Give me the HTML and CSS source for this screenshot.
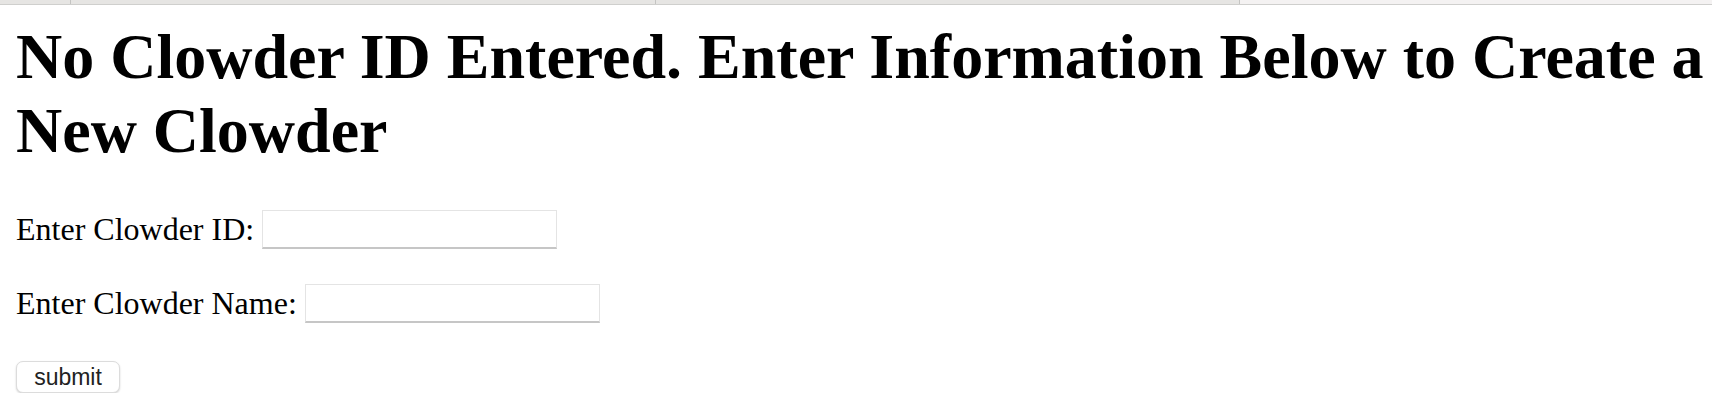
FILE: index.html
```html
<!DOCTYPE html>
<html>
<head>
<meta charset="utf-8">
<link rel="stylesheet" href="styles.css">
</head>
<body>
<div class="tabs">
  <div class="tab tab-a"></div>
  <div class="tab tab-b"></div>
  <div class="tab tab-c"></div>
  <div class="tab tab-active"></div>
</div>
<main class="page">
  <h1 class="title">No Clowder ID Entered. Enter Information Below to Create a New Clowder</h1>
  <form class="form">
    <div class="row">
      <label class="label" for="cid">Enter Clowder ID:</label>
      <input class="field" id="cid" type="text">
    </div>
    <div class="row">
      <label class="label" for="cname">Enter Clowder Name:</label>
      <input class="field" id="cname" type="text">
    </div>
    <button class="submit" type="button">submit</button>
  </form>
</main>
</body>
</html>
```
FILE: styles.css
```css
html, body {
  margin: 0;
  padding: 0;
  background: #ffffff;
}
body {
  font-family: "Liberation Serif", "Times New Roman", serif;
  color: #000;
}
.tabs {
  display: flex;
  height: 4px;
  border-bottom: 1px solid #cfcfcd;
  background: #e6e5e3;
}
.tab {
  height: 4px;
  border-right: 1px solid #c4c4c2;
}
.tab-a { width: 70px; }
.tab-b { width: 584px; }
.tab-c { width: 583px; }
.tab-active {
  flex: 1;
  border-right: none;
  background: #f4f2f2;
}
.page {
  padding: 0 0 0 16px;
}
.title {
  margin: 15px 0 43px;
  font-size: 64px;
  font-weight: bold;
  line-height: 1.149;
}
.form {
  display: flex;
  flex-direction: column;
  align-items: flex-start;
}
.row {
  display: flex;
  align-items: center;
  gap: 8px;
  margin-bottom: 35px;
}
.label {
  font-size: 32px;
  line-height: 1.149;
}
.field {
  box-sizing: border-box;
  width: 295px;
  height: 39px;
  margin: 0;
  background: #fff;
  border: 1px solid #e4e4e4;
  border-bottom: 2px solid #c6c6c6;
  border-radius: 0;
  outline: none;
}
.row + .row {
  margin-bottom: 38px;
}
.submit {
  box-sizing: border-box;
  width: 104px;
  height: 32px;
  margin: 0;
  padding: 0;
  background: #fff;
  border: 1px solid #dcdcdc;
  border-radius: 7px;
  box-shadow: 0 1px 2px rgba(0,0,0,0.18);
  font-family: "Liberation Sans", Arial, sans-serif;
  font-size: 23px;
  color: #222;
}
```
